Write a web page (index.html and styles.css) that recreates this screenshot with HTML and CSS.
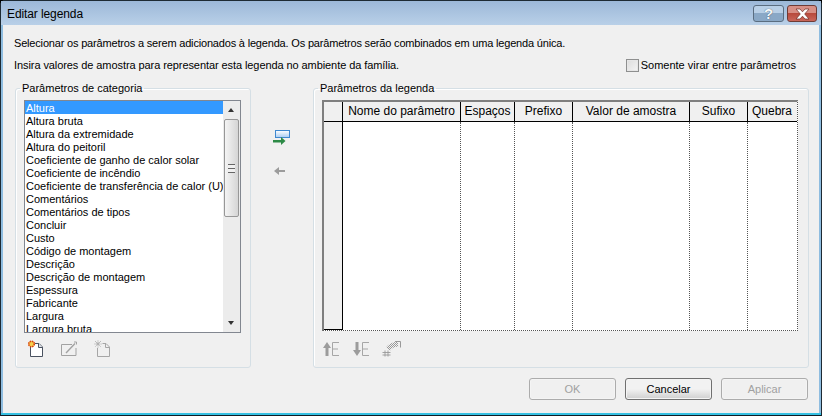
FILE: index.html
```html
<!DOCTYPE html>
<html lang="pt">

<head>
    <meta charset="UTF-8">
    <title>Editar legenda</title>
    <link rel="stylesheet" href="styles.css">
</head>

<body>
    <div class="window">
        <div class="titlebar">
            <span class="title">Editar legenda</span>
            <div class="caption-buttons">
                <div class="cap-btn help">?</div>
                <div class="cap-btn close">
                    <svg width="19" height="12" viewBox="0 0 19 12">
                        <path d="M3 1h4l2.500 2.800L12 1h4l-4.300 5 4.300 5h-4L9.500 8.200 7 11H3l4.300-5z" fill="#fff" stroke="#6b2a22" stroke-width="0.7"/>
                    </svg>
                </div>
            </div>
        </div>

        <div class="content">
            <p class="intro intro-first">Selecionar os parâmetros a serem adicionados à legenda. Os parâmetros serão combinados em uma legenda única.</p>
            <div class="intro-row">
                <p class="intro">Insira valores de amostra para representar esta legenda no ambiente da família.</p>
                <label class="check-label"><span class="checkbox"></span>Somente virar entre parâmetros</label>
            </div>

            <div class="panels">
                <fieldset class="group group-left">
                    <legend>Parâmetros de categoria</legend>
                    <div class="listbox">
                        <ul class="list">
                            <li class="selected">Altura</li>
                            <li>Altura bruta</li>
                            <li>Altura da extremidade</li>
                            <li>Altura do peitoril</li>
                            <li>Coeficiente de ganho de calor solar</li>
                            <li>Coeficiente de incêndio</li>
                            <li>Coeficiente de transferência de calor (U)</li>
                            <li>Comentários</li>
                            <li>Comentários de tipos</li>
                            <li>Concluir</li>
                            <li>Custo</li>
                            <li>Código de montagem</li>
                            <li>Descrição</li>
                            <li>Descrição de montagem</li>
                            <li>Espessura</li>
                            <li>Fabricante</li>
                            <li>Largura</li>
                            <li>Largura bruta</li>
                        </ul>
                        <div class="scrollbar">
                            <div class="arrow arrow-up"></div>
                            <div class="thumb"><span class="grip"></span></div>
                            <div class="arrow arrow-down"></div>
                        </div>
                    </div>
                    <div class="toolbar">
                        <svg width="18" height="18" viewBox="0 0 18 18">
                            <path d="M3.500 7V16.500H15.500V7L12 3.500H8" fill="#fff" stroke="#4a5260"/>
                            <path d="M11.500 3.500V7.500H15.500" fill="#dfe3ea" stroke="#4a5260"/>
                            <circle cx="4.500" cy="4" r="2.800" fill="#f6d04c" stroke="#d8430c" stroke-width="1.600" stroke-dasharray="1.500 0.700"/>
                        </svg>
                        <svg width="18" height="18" viewBox="0 0 18 18">
                            <path d="M16 8V15.500H1.500V4.500H12" fill="none" stroke="#a2a2a2"/>
                            <path d="M6 13L15 3.500" fill="none" stroke="#a2a2a2" stroke-width="1.400"/>
                            <path d="M14 2h2.500v2.500" fill="none" stroke="#a2a2a2"/>
                        </svg>
                        <svg width="18" height="18" viewBox="0 0 18 18">
                            <path d="M4.500 8V16.500H16.500V7L13 3.500H9.500" fill="#f0f0f0" stroke="#a6a6a6"/>
                            <path d="M12.500 3.500V7.500H16.500" fill="none" stroke="#a6a6a6"/>
                            <path d="M2 1l6 6M8 1l-6 6M5 0.500v7M1.500 4h7" stroke="#a6a6a6" stroke-dasharray="1 0.600"/>
                        </svg>
                    </div>
                </fieldset>

                <div class="move-buttons">
                    <svg width="18" height="18" viewBox="0 0 18 18">
                        <defs>
                            <linearGradient id="fieldFill" x1="0" y1="0" x2="0" y2="1">
                                <stop offset="0" stop-color="#ffffff"/>
                                <stop offset="1" stop-color="#a9cdf2"/>
                            </linearGradient>
                        </defs>
                        <rect x="2.500" y="0.500" width="14" height="7" fill="url(#fieldFill)" stroke="#3f88cf"/>
                        <path d="M0 10h8V7l4.500 4L8 15v-2.500H0z" fill="#2d8a46"/>
                    </svg>
                    <svg width="18" height="12" viewBox="0 0 18 12">
                        <path d="M12 5H6V2L1 6l5 4V7h6z" fill="#9c9c9c"/>
                    </svg>
                </div>

                <fieldset class="group group-right">
                    <legend>Parâmetros da legenda</legend>
                    <div class="grid">
                        <div class="grid-head">
                            <div class="row-head"></div>
                            <div class="col col-nome">Nome do parâmetro</div>
                            <div class="col col-espacos">Espaços</div>
                            <div class="col col-prefixo">Prefixo</div>
                            <div class="col col-valor">Valor de amostra</div>
                            <div class="col col-sufixo">Sufixo</div>
                            <div class="col col-quebra">Quebra</div>
                        </div>
                        <div class="grid-body">
                            <div class="row-head"></div>
                            <div class="col col-nome"></div>
                            <div class="col col-espacos"></div>
                            <div class="col col-prefixo"></div>
                            <div class="col col-valor"></div>
                            <div class="col col-sufixo"></div>
                            <div class="col col-quebra"></div>
                        </div>
                    </div>
                    <div class="toolbar toolbar-right">
                        <svg width="20" height="18" viewBox="0 0 20 18">
                            <path d="M5 2L9 8H6.500V16H3.500V8H1z" fill="#9c9c9c"/>
                            <path d="M17 2.500H10.500V15.500H17M10.500 9H16" fill="none" stroke="#a6a6a6"/>
                        </svg>
                        <svg width="20" height="18" viewBox="0 0 20 18">
                            <path d="M5 16L9 10H6.500V2H3.500V10H1z" fill="#9c9c9c"/>
                            <path d="M17 2.500H10.500V15.500H17M10.500 9H16" fill="none" stroke="#a6a6a6"/>
                        </svg>
                        <svg width="20" height="18" viewBox="0 0 20 18">
                            <defs>
                                <pattern id="dither" width="2" height="2" patternUnits="userSpaceOnUse">
                                    <rect width="1" height="1" fill="#999"/>
                                    <rect x="1" y="1" width="1" height="1" fill="#999"/>
                                </pattern>
                            </defs>
                            <path d="M6 9C8 6 11 4.500 16 4" fill="none" stroke="url(#dither)" stroke-width="5"/>
                            <path d="M13 1.500h5.500v6" fill="none" stroke="#999"/>
                            <path d="M3 10.500v6M6 10.500v6M0.500 12.500h8M0.500 15h8" stroke="#999" stroke-width="0.900"/>
                        </svg>
                    </div>
                </fieldset>
            </div>

            <div class="actions">
                <button class="btn" disabled>OK</button>
                <button class="btn btn-default">Cancelar</button>
                <button class="btn" disabled>Aplicar</button>
            </div>
        </div>
    </div>
</body>

</html>
```

FILE: styles.css
```css
html,
body {
    margin: 0;
    padding: 0;
}

body {
    font-family: 'Liberation Sans', sans-serif;
    font-size: 11px;
    color: #000;
    background: #000;
}

.window {
    width: 822px;
    height: 416px;
    box-sizing: border-box;
    display: flex;
    flex-direction: column;
    border: 1px solid #1d2a33;
    border-radius: 5px 5px 0 0;
    padding: 0 2px 2px;
    background: #8fbde0;
    border-bottom-color: #0f1d26;
    box-shadow: inset 0 -2px 0 #35c0e2;
}

.titlebar {
    height: 24px;
    flex: none;
    margin: 0 -2px;
    padding: 0 6px;
    display: flex;
    justify-content: space-between;
    background: linear-gradient(#9cb8d8, #b9d0e8);
}

.title {
    font-size: 12px;
    line-height: 27px;
    letter-spacing: -0.1px;
}

.caption-buttons {
    display: flex;
    gap: 3px;
    margin-right: -2px;
}

.cap-btn {
    height: 15px;
    border: 1px solid #5a6d80;
    border-radius: 3px;
    margin-top: 4px;
    display: flex;
    align-items: center;
    justify-content: center;
}

.help {
    width: 29px;
    background: linear-gradient(#b8cfe6 50%, #8aa8c6 50%);
    color: #f4f7fa;
    font-size: 15px;
    font-weight: bold;
    text-shadow: 0 0 1px #234;
}

.close {
    width: 28px;
    background: linear-gradient(#d78f85 45%, #b84a3c 50%, #c9665a);
    border-color: #6e3b35;
}

.content {
    flex: 1;
    min-height: 0;
    display: flex;
    flex-direction: column;
    background: #f0f0f0;
    padding: 11px 0 0 11px;
}

.intro {
    margin: 0;
    line-height: 15px;
    letter-spacing: -0.08px;
}

.intro-first {
    letter-spacing: -0.18px;
}

.intro-row {
    display: flex;
    justify-content: space-between;
    margin-top: 7px;
}

.check-label {
    display: flex;
    align-items: center;
    gap: 2px;
    margin: 0 23px 0 0;
    line-height: 15px;
}

.checkbox {
    width: 11px;
    height: 11px;
    border: 1px solid #8e8f8f;
    background: linear-gradient(135deg, #dcdcdc, #f4f4f4);
    box-shadow: inset 0 0 0 1px #e6e6e6;
}

.panels {
    display: flex;
    margin: 9px 0 0 1px;
}

.group {
    margin: 0;
    padding: 0;
    border: 1px solid #d5dfe5;
    border-radius: 3px;
    box-shadow: 1px 1px 0 #fff inset;
    box-sizing: border-box;
    height: 286px;
    min-width: 0;
}

.group legend {
    padding: 0 2px;
    margin-left: -4px;
    line-height: 13px;
}

.group-left {
    width: 236px;
    padding: 0 0 0 8px;
}

.group-right {
    width: 496px;
    padding: 0 0 0 8px;
}

.listbox {
    width: 217px;
    height: 233px;
    margin-top: 5px;
    box-sizing: border-box;
    border: 1px solid #828790;
    background: #fff;
    display: flex;
    overflow: hidden;
}

.list {
    list-style: none;
    margin: 0;
    padding: 0;
    width: 198px;
    height: 231px;
    overflow: hidden;
}

.list li {
    height: 13px;
    line-height: 15px;
    padding-left: 1px;
    white-space: nowrap;
    margin-left: 0;
}

.list .selected {
    background: #3399ff;
    color: #fff;
    margin-left: 0;
}

.scrollbar {
    width: 17px;
    flex: none;
    background: #ececec;
    display: flex;
    flex-direction: column;
    align-items: center;
}

.arrow {
    height: 17px;
    width: 17px;
    flex: none;
    position: relative;
}

.arrow::after {
    content: "";
    position: absolute;
    left: 5px;
    border-left: 3.5px solid transparent;
    border-right: 3.5px solid transparent;
}

.arrow-up::after {
    top: 7px;
    border-bottom: 4px solid #333;
}

.arrow-down {
    margin-top: auto;
}

.arrow-down::after {
    top: 6px;
    border-top: 4px solid #333;
}

.thumb {
    width: 15px;
    height: 98px;
    margin-top: 1px;
    box-sizing: border-box;
    border: 1px solid #979797;
    border-radius: 2px;
    background: linear-gradient(90deg, #f4f4f4, #d5d5d5);
    display: flex;
    align-items: center;
    justify-content: center;
}

.grip {
    width: 7px;
    height: 7px;
    border-top: 1px solid #666;
    border-bottom: 1px solid #666;
    background: linear-gradient(#f0f0f0 3px, #666 3px, #666 4px, #f0f0f0 4px);
}

.toolbar {
    display: flex;
    gap: 15px;
    margin: 7px 0 0 3px;
}

.toolbar-right {
    gap: 10px;
    margin: 9px 0 0 0;
}

.move-buttons {
    width: 62px;
    flex: none;
    display: flex;
    flex-direction: column;
    align-items: center;
    gap: 17px;
    padding-top: 48px;
    box-sizing: border-box;
}

.grid {
    width: 476px;
    height: 231px;
    margin-top: 5px;
    box-sizing: border-box;
    border-top: 2px solid #7f7f7f;
    border-left: 2px solid #7f7f7f;
    border-right: 1px dotted #555;
    border-bottom: 1px dotted #555;
    background: #fff;
    display: flex;
    flex-direction: column;
}

.grid-head {
    display: flex;
    height: 20px;
    flex: none;
    box-sizing: border-box;
    border-bottom: 1px solid #000;
    background: #f0f0f0;
    line-height: 19px;
    text-align: center;
    font-size: 12px;
}

.grid-body {
    display: flex;
    flex: 1;
}

.row-head {
    width: 19px;
    flex: none;
    box-sizing: border-box;
    background: #f0f0f0;
    border-right: 1px solid #000;
    border-bottom: 1px solid #000;
}

.grid-head .row-head {
    border-bottom: none;
}

.col {
    flex: none;
    box-sizing: border-box;
    white-space: nowrap;
}

.grid-head .col {
    border-right: 1px solid #000;
}

.grid-body .col {
    border-right: 1px dotted #555;
}

.grid-head .col:last-child,
.grid-body .col:last-child {
    border-right: none;
}

.col-nome {
    width: 118px;
}

.col-espacos {
    width: 54px;
}

.col-prefixo {
    width: 58px;
}

.col-valor {
    width: 117px;
}

.col-sufixo {
    width: 58px;
}

.col-quebra {
    width: 48px;
}

.actions {
    display: flex;
    justify-content: flex-end;
    gap: 9px;
    margin-top: 10px;
    padding-right: 11px;
}

.btn {
    width: 87px;
    height: 22px;
    padding: 0;
    font: inherit;
    border: 1px solid #acacac;
    border-radius: 3px;
    background: #f0f0f0;
    color: #a0a0a0;
    box-shadow: inset 0 0 0 1px #f4f4f4;
}

.btn-default {
    border-color: #707070;
    color: #000;
    background: linear-gradient(#f2f2f2 50%, #cfcfcf);
}
```
